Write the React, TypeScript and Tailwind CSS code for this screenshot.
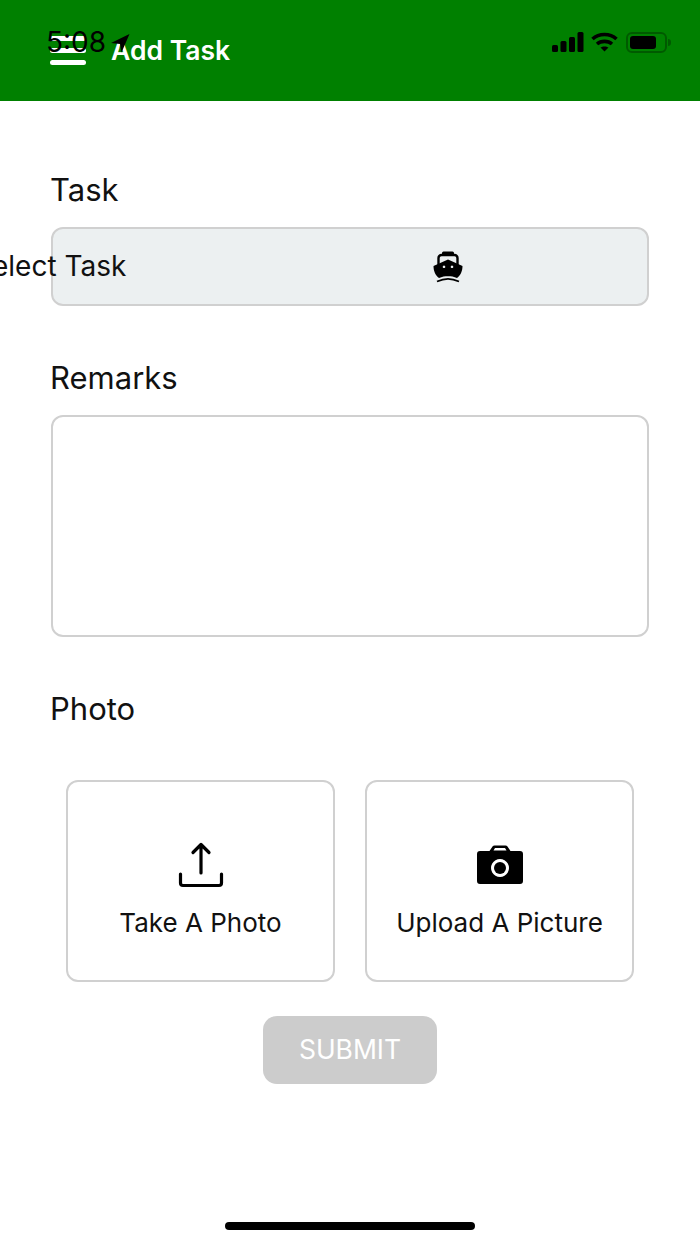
const font = 'font-["Inter","Noto_Sans",sans-serif]';

function StatusBar() {
  return (
    <div className="absolute left-0 top-0 flex h-[84px] w-full items-center justify-between pl-[46px] pr-[29px] text-black">
      <div className="flex items-center gap-[4px]">
        <span className="text-[28px] leading-none">5:08</span>
        <svg width="20" height="20" viewBox="0 0 20 20" className="mt-[1px]">
          <path d="M19.5 1 L1 10 L10 11 L11.5 19.5 Z" fill="#000" />
        </svg>
      </div>
      <div className="flex items-center gap-[8px]">
        <svg width="32" height="20" viewBox="0 0 32 20" fill="#000" className="mr-[-1px]">
          <rect x="0" y="13" width="6" height="7" rx="1.5" />
          <rect x="8.5" y="9" width="6" height="11" rx="1.5" />
          <rect x="17" y="5" width="6" height="15" rx="1.5" />
          <rect x="25.5" y="0" width="6" height="20" rx="1.5" />
        </svg>
        <svg width="27" height="20" viewBox="0 0 27 20" fill="none" stroke="#000" strokeWidth="3.6">
          <path d="M1.5 7 C8 1 19 1 25.5 7" />
          <path d="M6 12 C10 8.5 17 8.5 21 12" />
          <path d="M13.5 19.5 L9.5 15.5 C11.5 14 15.5 14 17.5 15.5 Z" fill="#000" stroke="none" />
        </svg>
        <div className="flex items-center">
          <div className="flex h-[21px] w-[41px] items-center rounded-[6px] border-2 border-[#005a00] p-[2px]">
            <div className="h-full w-[26px] rounded-[3px] bg-black" />
          </div>
          <div className="ml-[1px] h-[7px] w-[3px] rounded-r-sm bg-[#005a00]" />
        </div>
      </div>
    </div>
  );
}

function Label({ children, className }: { children: string; className: string }) {
  return <div className={`ml-[-1px] text-[31px] leading-[36px] text-[#111] ${className}`}>{children}</div>;
}

function ActionCard({ icon, label }: { icon: React.ReactNode; label: string }) {
  return (
    <div className="flex h-[202px] flex-1 flex-col items-center rounded-[12px] border-2 border-[#d0d0d0] pt-[58px]">
      <div className="flex h-[50px] items-center justify-center">{icon}</div>
      <div className="mt-[17px] text-[26px] leading-[32px] text-[#111]">{label}</div>
    </div>
  );
}

export default function App() {
  return (
    <div className={`relative flex h-[1244px] w-[700px] flex-col overflow-hidden bg-white ${font}`}>
      <header className="flex h-[101px] items-center bg-[#008000] pl-[50px]">
        <div className="flex w-[36px] flex-col gap-[7px]">
          <div className="h-[5px] rounded bg-white" />
          <div className="h-[5px] rounded bg-white" />
          <div className="h-[5px] rounded bg-white" />
        </div>
        <div className="ml-[25px] text-[26.5px] font-semibold leading-none text-white">Add Task</div>
      </header>
      <StatusBar />

      <main className="flex flex-1 flex-col px-[51px]">
        <Label className="mt-[71px]">Task</Label>
        <div className="mt-[19px] flex h-[79px] items-center rounded-[12px] border-2 border-[#d0d0d0] bg-[#ecf0f1]">
          <span className="mt-[-2px] ml-[-79px] whitespace-nowrap text-[28px] leading-none text-[#111]">Select Task</span>
          <svg width="30" height="32" viewBox="0 0 30 32" className="ml-[307px] shrink-0" fill="#000">
            <path d="M10.5 0.5 h9 a1.5 1.5 0 0 1 1.5 1.5 v2 h-12 v-2 a1.5 1.5 0 0 1 1.5 -1.5 Z" />
            <path d="M5.5 14 V7 a3 3 0 0 1 3 -3 h13 a3 3 0 0 1 3 3 v7" fill="none" stroke="#000" strokeWidth="2.4" />
            <path
              fillRule="evenodd"
              d="M15 8.5 L29.5 15 C29.5 20 27.5 24.5 24 27 C21 25.6 18 25.2 15 25.2 C12 25.2 9 25.6 6 27 C2.5 24.5 0.5 20 0.5 15 Z M11 14.5 a1.3 1.3 0 1 0 0.01 0 Z M19 14.5 a1.3 1.3 0 1 0 0.01 0 Z"
            />
            <path d="M4 30.5 C9 28.2 12 27.8 15 27.8 C18 27.8 21 28.2 26 30.5" fill="none" stroke="#000" strokeWidth="1.8" />
          </svg>
        </div>

        <Label className="mt-[54px]">Remarks</Label>
        <div className="mt-[19px] h-[222px] rounded-[12px] border-2 border-[#d0d0d0]" />

        <Label className="mt-[54px]">Photo</Label>
        <div className="mt-[53px] flex gap-[30px] px-[15px]">
          <ActionCard
            label="Take A Photo"
            icon={
              <svg width="46" height="46" viewBox="0 0 46 46" fill="none" stroke="#000" strokeWidth="3.2" strokeLinecap="round" strokeLinejoin="round">
                <path d="M23 31 V2.5 M15 10.5 L23 2.5 L31 10.5" />
                <path d="M2.5 32 V41 a2.5 2.5 0 0 0 2.5 2.5 H41 a2.5 2.5 0 0 0 2.5 -2.5 V32" />
              </svg>
            }
          />
          <ActionCard
            label="Upload A Picture"
            icon={
              <svg width="46" height="40" viewBox="0 0 46 40" fill="#000">
                <path
                  fillRule="evenodd"
                  d="M3 6 H12.5 L15.5 1.5 A2.5 2.5 0 0 1 17.5 0.5 H28.5 A2.5 2.5 0 0 1 30.5 1.5 L33.5 6 H43 A3 3 0 0 1 46 9 V36 A3 3 0 0 1 43 39 H3 A3 3 0 0 1 0 36 V9 A3 3 0 0 1 3 6 Z M18 3 L16.5 5.5 H29.5 L28 3 Z M23 14 A9 9 0 1 0 23.01 14 Z"
                />
                <circle cx="23" cy="23" r="6" />
              </svg>
            }
          />
        </div>

        <button
          type="button"
          className="mx-auto mt-[34px] h-[68px] w-[174px] rounded-[14px] bg-[#cccccc] text-[26.5px] text-white"
        >
          SUBMIT
        </button>
      </main>

      <div className="absolute bottom-[14px] left-[225px] h-[8px] w-[250px] rounded-full bg-black" />
    </div>
  );
}
